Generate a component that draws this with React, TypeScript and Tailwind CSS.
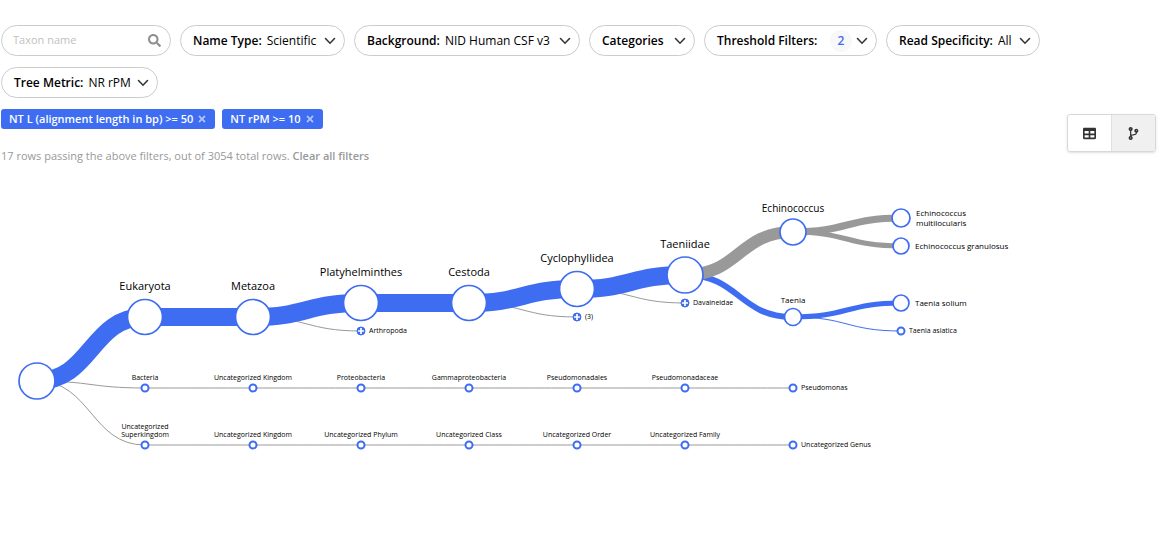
import { useState } from "react";
import type { ReactNode } from "react";
import { FaCodeBranch, FaSearch, FaTable, FaTimes } from "react-icons/fa";
import clsx from "clsx";

const BLUE = "#3e6df2";
const GRAY = "#999999";

type TaxonNode = {
  id: string;
  parent?: string;
  label: string[];
  x: number;
  y: number;
  r: number;
  link?: number;
  color?: string;
  side?: boolean;
  collapsed?: boolean;
};

// Parents come before their children, thin links before the thick ones that cover them
const NODES: TaxonNode[] = [
  { id: "root", label: [], x: 37, y: 211, r: 18 },
  { id: "bact", parent: "root", label: ["Bacteria"], x: 145, y: 218, r: 3.5 },
  { id: "bact-k", parent: "bact", label: ["Uncategorized Kingdom"], x: 253, y: 218, r: 3.5 },
  { id: "bact-p", parent: "bact-k", label: ["Proteobacteria"], x: 361, y: 218, r: 3.5 },
  { id: "bact-c", parent: "bact-p", label: ["Gammaproteobacteria"], x: 469, y: 218, r: 3.5 },
  { id: "bact-o", parent: "bact-c", label: ["Pseudomonadales"], x: 577, y: 218, r: 3.5 },
  { id: "bact-f", parent: "bact-o", label: ["Pseudomonadaceae"], x: 685, y: 218, r: 3.5 },
  { id: "bact-g", parent: "bact-f", label: ["Pseudomonas"], x: 793, y: 218, r: 3.5, side: true },
  { id: "unc", parent: "root", label: ["Uncategorized", "Superkingdom"], x: 145, y: 275, r: 3.5 },
  { id: "unc-k", parent: "unc", label: ["Uncategorized Kingdom"], x: 253, y: 275, r: 3.5 },
  { id: "unc-p", parent: "unc-k", label: ["Uncategorized Phylum"], x: 361, y: 275, r: 3.5 },
  { id: "unc-c", parent: "unc-p", label: ["Uncategorized Class"], x: 469, y: 275, r: 3.5 },
  { id: "unc-o", parent: "unc-c", label: ["Uncategorized Order"], x: 577, y: 275, r: 3.5 },
  { id: "unc-f", parent: "unc-o", label: ["Uncategorized Family"], x: 685, y: 275, r: 3.5 },
  { id: "unc-g", parent: "unc-f", label: ["Uncategorized Genus"], x: 793, y: 275, r: 3.5, side: true },
  { id: "euk", parent: "root", label: ["Eukaryota"], x: 145, y: 147, r: 17.5, link: 18, color: BLUE },
  { id: "met", parent: "euk", label: ["Metazoa"], x: 253, y: 147, r: 17.5, link: 18, color: BLUE },
  { id: "art", parent: "met", label: ["Arthropoda"], x: 361, y: 161, r: 4, side: true, collapsed: true },
  { id: "pla", parent: "met", label: ["Platyhelminthes"], x: 361, y: 133, r: 17.5, link: 18, color: BLUE },
  { id: "ces", parent: "pla", label: ["Cestoda"], x: 469, y: 133, r: 17.5, link: 18, color: BLUE },
  { id: "others", parent: "ces", label: ["(3)"], x: 577, y: 147, r: 4, side: true, collapsed: true },
  { id: "cyc", parent: "ces", label: ["Cyclophyllidea"], x: 577, y: 119, r: 17.5, link: 18, color: BLUE },
  { id: "dav", parent: "cyc", label: ["Davaineidae"], x: 685, y: 133, r: 4, side: true, collapsed: true },
  { id: "tae", parent: "cyc", label: ["Taeniidae"], x: 685, y: 105, r: 18, link: 18, color: BLUE },
  { id: "taenia", parent: "tae", label: ["Taenia"], x: 793, y: 147, r: 8.5, link: 6, color: BLUE },
  { id: "ech", parent: "tae", label: ["Echinococcus"], x: 793, y: 62, r: 13, link: 12, color: GRAY },
  { id: "ech-m", parent: "ech", label: ["Echinococcus", "multilocularis"], x: 901, y: 48, r: 9, link: 7, color: GRAY, side: true },
  { id: "ech-g", parent: "ech", label: ["Echinococcus granulosus"], x: 901, y: 76, r: 8, link: 5, color: GRAY, side: true },
  { id: "tae-a", parent: "taenia", label: ["Taenia asiatica"], x: 901, y: 161, r: 3.5, link: 1, color: BLUE, side: true },
  { id: "tae-s", parent: "taenia", label: ["Taenia solium"], x: 901, y: 133, r: 8, link: 5, color: BLUE, side: true },
];

const BY_ID = new Map(NODES.map((node) => [node.id, node]));

function linkPath(from: TaxonNode, to: TaxonNode) {
  const mid = (from.x + to.x) / 2;
  return `M${from.x},${from.y}C${mid},${from.y} ${mid},${to.y} ${to.x},${to.y}`;
}

// Font size and distance of the label above its node, by node radius
function labelStyle(r: number) {
  if (r > 15) return { className: "text-[11px]", rise: 27 };
  if (r > 10) return { className: "text-[10px]", rise: 20 };
  if (r > 5) return { className: "text-[8px]", rise: 14 };
  return { className: "text-[7px]", rise: 8 };
}

function NodeLabel({ node }: { node: TaxonNode }) {
  const { className, rise } = labelStyle(node.r);
  const lineHeight = node.r > 5 ? 10 : 8;
  const extra = (node.label.length - 1) * lineHeight;
  const x = node.side ? node.x + Math.round(node.r) + (node.r > 5 ? 6 : 4) : node.x;
  const y = node.side ? node.y + (node.r > 5 ? 3 : 2) - extra / 2 : node.y - rise - extra;
  return (
    <text x={x} y={y} textAnchor={node.side ? "start" : "middle"} className={className}>
      {node.label.map((line, i) => (
        <tspan key={line} x={x} dy={i === 0 ? 0 : lineHeight}>
          {line}
        </tspan>
      ))}
    </text>
  );
}

function TaxonTree() {
  return (
    <svg className="block h-[360px] w-full overflow-visible" role="img" aria-label="Taxonomic tree">
      {NODES.map((node) => {
        const parent = node.parent && BY_ID.get(node.parent);
        if (!parent) return null;
        return (
          <path
            key={node.id}
            d={linkPath(parent, node)}
            fill="none"
            stroke={node.color ?? GRAY}
            strokeWidth={node.link ?? 1}
          />
        );
      })}
      {NODES.map((node) => (
        <g key={node.id}>
          <circle
            cx={node.x}
            cy={node.y}
            r={node.r}
            fill={node.collapsed ? BLUE : "#fff"}
            stroke={BLUE}
            strokeWidth={node.collapsed ? 1 : node.r > 5 ? 1.7 : 2}
          />
          {node.collapsed && (
            <path d={`M${node.x - 3},${node.y}h6M${node.x},${node.y - 3}v6`} stroke="#fff" strokeWidth={1.7} />
          )}
          <NodeLabel node={node} />
        </g>
      ))}
    </svg>
  );
}

function Chevron() {
  return (
    <svg viewBox="0 0 12 8" className="pointer-events-none h-2 w-3 flex-none" aria-hidden>
      <path d="M1.5 1.5 6 6.2l4.5-4.7" fill="none" stroke="#333" strokeWidth="1.6" strokeLinecap="round" />
    </svg>
  );
}

const PILL = "flex h-[31px] items-center rounded-full border border-[#ccc] bg-white pr-2 pl-3 text-[12px]";

function SelectFilter({ label, options, className }: { label: string; options: string[]; className: string }) {
  return (
    <label className={clsx(PILL, className)}>
      <span className="font-semibold whitespace-nowrap">{label}:</span>
      <select className="ml-[5px] min-w-0 flex-1 appearance-none bg-transparent outline-none">
        {options.map((option) => (
          <option key={option}>{option}</option>
        ))}
      </select>
      <Chevron />
    </label>
  );
}

function FilterTag({ children, onRemove }: { children: ReactNode; onRemove: () => void }) {
  return (
    <span className="flex h-5 items-center gap-1 rounded-[3px] bg-[#3e6df2] px-2 text-[11px] font-semibold text-white">
      {children}
      <button type="button" aria-label="Remove filter" onClick={onRemove} className="text-white/60">
        <FaTimes className="h-[10px] w-[10px]" />
      </button>
    </span>
  );
}

export default function App() {
  const [tags, setTags] = useState(["NT L (alignment length in bp) >= 50", "NT rPM >= 10"]);
  const [view, setView] = useState("tree");

  return (
    <main className="min-h-screen bg-white pt-[25px] pl-px font-['Open_Sans',sans-serif] text-black">
      {/* Filters */}
      <div className="flex flex-wrap gap-x-[9px] gap-y-[11px] pr-20">
        <div className="flex h-[31px] w-[170px] items-center rounded-full border border-[#ccc] pr-[9px] pl-[11px]">
          <input
            aria-label="Taxon name"
            placeholder="Taxon name"
            className="min-w-0 flex-1 text-[11px] outline-none placeholder:text-[#bfbfbf]"
          />
          <FaSearch className="h-[13px] w-[13px] flex-none text-[#8f8f8f]" />
        </div>
        <SelectFilter label="Name Type" options={["Scientific", "Common"]} className="w-[165px]" />
        <SelectFilter label="Background" options={["NID Human CSF v3"]} className="w-[226px]" />
        <button type="button" className={clsx(PILL, "w-[106px] justify-between font-semibold")}>
          Categories
          <Chevron />
        </button>
        <button type="button" className={clsx(PILL, "w-[173px] font-semibold")}>
          <span className="flex-1 text-left whitespace-nowrap">Threshold Filters:</span>
          <span className="mr-1 grid h-[22px] w-[22px] place-items-center rounded-full bg-[#f8f8f8] text-[#3e6df2]">
            {tags.length}
          </span>
          <Chevron />
        </button>
        <SelectFilter label="Read Specificity" options={["All", "Specific Only"]} className="w-[154px]" />
        <SelectFilter label="Tree Metric" options={["NR rPM", "NT rPM"]} className="w-[157px]" />
      </div>

      {/* Active filters and view switch */}
      <div className="flex items-start justify-between pr-[9px]">
        <div className="pt-[11px]">
          <div className="flex h-5 gap-[7px]">
            {tags.map((tag) => (
              <FilterTag key={tag} onRemove={() => setTags(tags.filter((t) => t !== tag))}>
                {tag}
              </FilterTag>
            ))}
          </div>
          <p className="mt-[19px] text-[11px] leading-4 text-[#999]">
            17 rows passing the above filters, out of 3054 total rows.{" "}
            <button type="button" onClick={() => setTags([])} className="font-semibold">
              Clear all filters
            </button>
          </p>
        </div>
        <div className="mt-4 flex h-[38px] w-[89px] overflow-hidden rounded-[3px] border border-[#d8d8d8] shadow-sm">
          <button
            type="button"
            aria-label="Table view"
            onClick={() => setView("table")}
            className={clsx("grid flex-1 place-items-center", view === "table" && "bg-[#f0f0f0]")}
          >
            <FaTable className="h-[13px] w-[13px] text-[#333]" />
          </button>
          <button
            type="button"
            aria-label="Tree view"
            onClick={() => setView("tree")}
            className={clsx(
              "grid flex-1 place-items-center border-l border-[#e0e0e0]",
              view === "tree" && "bg-[#f0f0f0]"
            )}
          >
            <FaCodeBranch className="h-[13px] w-[13px] text-[#333]" />
          </button>
        </div>
      </div>

      <div className="-ml-px pt-1.5">
        <TaxonTree />
      </div>
    </main>
  );
}
